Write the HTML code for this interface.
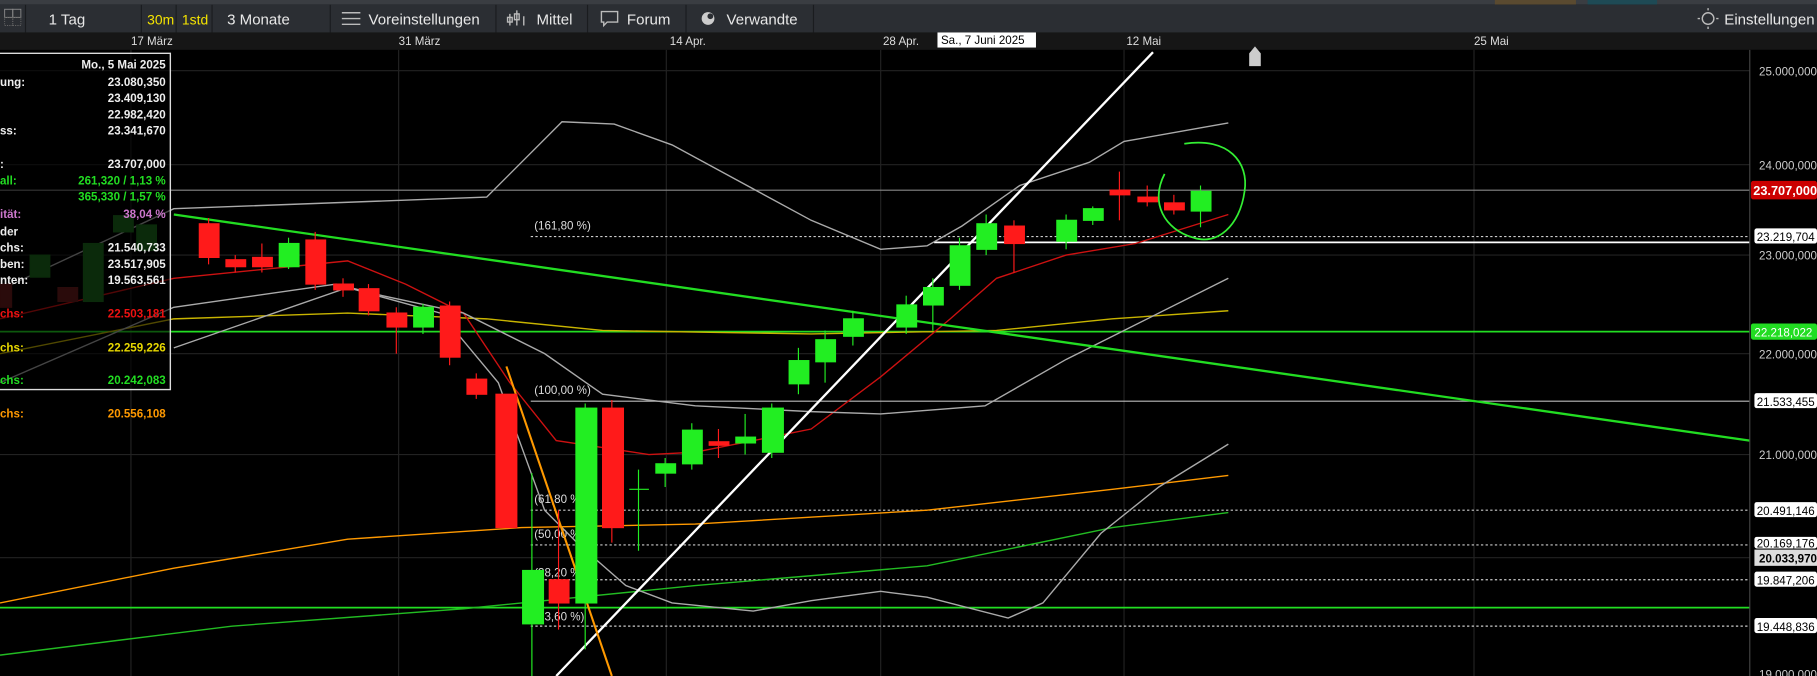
<!DOCTYPE html>
<html><head><meta charset="utf-8"><style>
html,body{margin:0;padding:0;background:#000;overflow:hidden}
svg{display:block}
text{font-family:"Liberation Sans",sans-serif}
</style></head><body>
<svg width="1817" height="676" viewBox="0 0 1568 583" preserveAspectRatio="none" xmlns="http://www.w3.org/2000/svg">
<rect width="1568" height="583" fill="#000"/>
<!-- top strip -->
<rect x="0" y="0" width="1568" height="4" fill="#3a3d42"/>
<rect x="1370" y="0" width="60" height="4" fill="#1e4a55"/>
<rect x="1290" y="0" width="70" height="4" fill="#5a4a30"/>
<!-- toolbar -->
<rect x="0" y="4" width="1568" height="24" fill="#2b2e33"/>
<g stroke="#1a1c1f" stroke-width="1">
<line x1="22" y1="4" x2="22" y2="28"/><line x1="122" y1="4" x2="122" y2="28"/><line x1="152" y1="4" x2="152" y2="28"/><line x1="183" y1="4" x2="183" y2="28"/><line x1="285" y1="4" x2="285" y2="28"/><line x1="428" y1="4" x2="428" y2="28"/><line x1="507" y1="4" x2="507" y2="28"/><line x1="592" y1="4" x2="592" y2="28"/><line x1="702" y1="4" x2="702" y2="28"/>
</g>
<rect x="4" y="8" width="7" height="7" fill="none" stroke="#888" stroke-width="0.8"/><rect x="11" y="8" width="7" height="7" fill="none" stroke="#888" stroke-width="0.8"/><rect x="4" y="15" width="7" height="7" fill="none" stroke="#666" stroke-width="0.8" stroke-dasharray="1,1"/><rect x="11" y="15" width="7" height="7" fill="none" stroke="#666" stroke-width="0.8" stroke-dasharray="1,1"/>
<g font-size="13" fill="#e8e8e8">
<text x="42" y="21">1 Tag</text>
<text x="127" y="21" fill="#f5e400" font-size="12">30m</text>
<text x="157" y="21" fill="#f5e400" font-size="12">1std</text>
<text x="196" y="21">3 Monate</text>
<text x="318" y="21">Voreinstellungen</text>
<text x="463" y="21">Mittel</text>
<text x="541" y="21">Forum</text>
<text x="627" y="21">Verwandte</text>
<text x="1488" y="21">Einstellungen</text>
</g>
<g stroke="#bbb" stroke-width="1.2" fill="none">
<line x1="295" y1="11" x2="311" y2="11"/><line x1="295" y1="16" x2="311" y2="16"/><line x1="295" y1="21" x2="311" y2="21"/>
<path d="M440 12v10M446 9v13M452 14v8"/><rect x="438" y="15" width="4" height="4"/><rect x="444" y="12" width="4" height="5"/>
<path d="M519 10h14v9h-9l-3 3v-3h-2z"/>
<circle cx="1474" cy="16" r="5"/><path d="M1467 16h-2M1481 16h2M1474 9v-2M1474 23v2"/>
</g>
<circle cx="611" cy="16" r="5.5" fill="#ccc"/><circle cx="613" cy="14" r="2.5" fill="#2b2e33"/>
<!-- date row -->
<rect x="0" y="28" width="1568" height="15" fill="#161616"/>
<g font-size="10" fill="#ddd">
<text x="113" y="39">17 März</text><text x="344" y="39">31 März</text><text x="578" y="39">14 Apr.</text><text x="762" y="39">28 Apr.</text><text x="972" y="39">12 Mai</text><text x="1272" y="39">25 Mai</text>
</g>
<rect x="809" y="28" width="85" height="13" fill="#fff"/><text x="812" y="38" font-size="10" fill="#000">Sa., 7 Juni 2025</text>
<!-- grid -->
<g stroke="#222" stroke-width="1">
<line x1="113" y1="43" x2="113" y2="583"/><line x1="344" y1="43" x2="344" y2="583"/><line x1="575" y1="43" x2="575" y2="583"/><line x1="760" y1="43" x2="760" y2="583"/><line x1="970" y1="43" x2="970" y2="583"/><line x1="1272" y1="43" x2="1272" y2="583"/>
<line x1="0" y1="61" x2="1510" y2="61"/><line x1="0" y1="142" x2="1510" y2="142"/><line x1="0" y1="220" x2="1510" y2="220"/><line x1="0" y1="305" x2="1510" y2="305"/><line x1="0" y1="392" x2="1510" y2="392"/><line x1="0" y1="481" x2="1510" y2="481"/>
</g>
<!-- horizontal levels -->
<line x1="0" y1="164" x2="1510" y2="164" stroke="#888" stroke-width="1"/>
<line x1="458" y1="204" x2="1510" y2="204" stroke="#ccc" stroke-dasharray="2,2"/>
<line x1="806" y1="209" x2="1510" y2="209" stroke="#fff" stroke-width="1.5"/>
<line x1="0" y1="286" x2="1510" y2="286" stroke="#22dd22" stroke-width="1.5"/>
<line x1="458" y1="346" x2="1510" y2="346" stroke="#bbb" stroke-width="1"/>
<g stroke="#ccc" stroke-dasharray="2,2"><line x1="458" y1="440" x2="1510" y2="440"/><line x1="458" y1="470" x2="1510" y2="470"/><line x1="458" y1="500" x2="1510" y2="500"/><line x1="458" y1="540" x2="1510" y2="540"/></g>
<line x1="0" y1="524" x2="1510" y2="524" stroke="#22dd22" stroke-width="1.5"/>
<g font-size="10" fill="#ddd"><text x="461" y="198">(161,80 %)</text><text x="461" y="340">(100,00 %)</text><text x="461" y="434">(61,80 %)</text><text x="461" y="464">(50,00 %)</text><text x="461" y="497">(38,20 %)</text><text x="461" y="535">(23,60 %)</text></g>
<!-- MAs -->
<polyline fill="none" stroke="#ff9900" stroke-width="1.2" points="0,520 150,490 300,465 450,455 600,452 800,440 960,422 1060,410"/>
<polyline fill="none" stroke="#22bb22" stroke-width="1.2" points="0,565 200,540 400,525 600,505 800,488 960,455 1060,442"/>
<polyline fill="none" stroke="#c8b400" stroke-width="1.2" points="0,305 150,275 300,270 420,275 520,285 700,288 860,285 960,275 1060,268"/>
<polyline fill="none" stroke="#cc1111" stroke-width="1.2" points="0,275 150,240 300,225 350,245 400,270 440,330 480,380 560,392 600,390 700,370 760,325 820,275 860,240 920,220 980,210 1060,185"/>
<polyline fill="none" stroke="#aaa" stroke-width="1.2" points="0,250 150,180 420,170 485,105 530,107 580,125 700,190 760,215 800,212 830,195 880,160 940,140 970,122 1060,106"/>
<polyline fill="none" stroke="#aaa" stroke-width="1.2" points="0,330 150,265 290,245 330,255 400,270 470,305 520,340 600,350 700,355 760,357 850,350 920,310 970,285 1060,240"/>
<polyline fill="none" stroke="#aaa" stroke-width="1.2" points="150,300 300,248 380,270 430,330 470,440 500,470 540,505 580,520 650,527 700,518 760,510 800,515 870,533 900,520 950,460 1000,420 1060,383"/>
<!-- trendlines -->
<line x1="150" y1="185" x2="1510" y2="380" stroke="#22dd22" stroke-width="2"/>
<line x1="480" y1="583" x2="995" y2="45" stroke="#fff" stroke-width="2"/>
<line x1="437" y1="316" x2="528" y2="583" stroke="#ff9900" stroke-width="1.8"/>
<!-- candles -->
<g stroke-width="1">
<g fill="#ff1a1a" stroke="#ff1a1a">
<line x1="180" y1="188" x2="180" y2="228"/><rect x="172" y="193" width="17" height="29"/>
<line x1="203" y1="220" x2="203" y2="235"/><rect x="195" y="224" width="17" height="6"/>
<line x1="226" y1="210" x2="226" y2="235"/><rect x="218" y="222" width="17" height="8"/>
<line x1="272" y1="200" x2="272" y2="250"/><rect x="264" y="207" width="17" height="38"/>
<line x1="296" y1="240" x2="296" y2="256"/><rect x="288" y="245" width="17" height="5"/>
<line x1="318" y1="245" x2="318" y2="272"/><rect x="310" y="249" width="17" height="19"/>
<line x1="342" y1="265" x2="342" y2="305"/><rect x="334" y="270" width="17" height="12"/>
<line x1="388" y1="260" x2="388" y2="315"/><rect x="380" y="264" width="17" height="44"/>
<line x1="411" y1="322" x2="411" y2="344"/><rect x="403" y="327" width="17" height="13"/>
<rect x="428" y="340" width="18" height="115"/>
<line x1="482" y1="440" x2="482" y2="543"/><rect x="474" y="500" width="17" height="20"/>
<line x1="528" y1="345" x2="528" y2="468"/><rect x="520" y="352" width="18" height="103"/>
<line x1="620" y1="370" x2="620" y2="395"/><rect x="612" y="381" width="17" height="3"/>
<line x1="875" y1="190" x2="875" y2="235"/><rect x="867" y="195" width="17" height="15"/>
<line x1="966" y1="148" x2="966" y2="190"/><rect x="958" y="164" width="17" height="4"/>
<line x1="990" y1="160" x2="990" y2="178"/><rect x="982" y="170" width="17" height="4"/>
<line x1="1013" y1="168" x2="1013" y2="185"/><rect x="1005" y="175" width="17" height="6"/>
</g>
<g fill="#22ee22" stroke="#22ee22">
<line x1="249" y1="205" x2="249" y2="232"/><rect x="241" y="210" width="17" height="20"/>
<line x1="365" y1="262" x2="365" y2="288"/><rect x="357" y="265" width="17" height="17"/>
<line x1="459" y1="408" x2="459" y2="583"/><rect x="451" y="492" width="18" height="46"/>
<line x1="505" y1="348" x2="505" y2="560"/><rect x="497" y="352" width="18" height="168"/>
<line x1="551" y1="405" x2="551" y2="475"/><line x1="543" y1="422" x2="560" y2="422"/>
<line x1="574" y1="395" x2="574" y2="420"/><rect x="566" y="400" width="17" height="8"/>
<line x1="597" y1="365" x2="597" y2="405"/><rect x="589" y="371" width="17" height="29"/>
<line x1="643" y1="357" x2="643" y2="392"/><rect x="635" y="377" width="17" height="5"/>
<line x1="666" y1="348" x2="666" y2="395"/><rect x="658" y="352" width="18" height="38"/>
<line x1="689" y1="300" x2="689" y2="340"/><rect x="681" y="311" width="17" height="20"/>
<line x1="712" y1="285" x2="712" y2="330"/><rect x="704" y="293" width="17" height="19"/>
<line x1="736" y1="268" x2="736" y2="298"/><rect x="728" y="275" width="17" height="15"/>
<line x1="782" y1="255" x2="782" y2="288"/><rect x="774" y="263" width="17" height="19"/>
<line x1="805" y1="240" x2="805" y2="285"/><rect x="797" y="248" width="17" height="15"/>
<line x1="828" y1="205" x2="828" y2="250"/><rect x="820" y="212" width="17" height="34"/>
<line x1="851" y1="185" x2="851" y2="220"/><rect x="843" y="193" width="17" height="22"/>
<line x1="920" y1="185" x2="920" y2="215"/><rect x="912" y="190" width="17" height="18"/>
<line x1="943" y1="178" x2="943" y2="194"/><rect x="935" y="180" width="17" height="10"/>
<line x1="1036" y1="160" x2="1036" y2="196"/><rect x="1028" y="165" width="17" height="17"/>
</g>
<g fill="#1c6a1c" stroke="#1c6a1c">
<rect x="26" y="220" width="17" height="19"/><rect x="72" y="210" width="17" height="50"/><rect x="118" y="194" width="17" height="22"/><rect x="98" y="186" width="17" height="14"/>
</g>
<g fill="#6a1c1c" stroke="#6a1c1c"><rect x="50" y="248" width="17" height="12"/><rect x="0" y="245" width="10" height="20"/></g>
</g>
<!-- green circle -->
<path d="M1022,124 C1060,118 1078,140 1074,165 C1070,195 1050,212 1030,205 C1005,198 992,175 1005,150" fill="none" stroke="#33ee33" stroke-width="1.5"/>
<path d="M1078,46 l5,-6 l5,6 v11 h-10z" fill="#ccc"/>
<!-- left panel -->
<rect x="0" y="46" width="147" height="290" fill="#000" opacity="0.6"/>
<path d="M0 46H147V336H0" fill="none" stroke="#ddd" stroke-width="1.2"/>
<g font-size="10" font-weight="bold" fill="#eee">
<text x="143" y="59" text-anchor="end">Mo., 5 Mai 2025</text>
<text x="0" y="74">ung:</text><text x="143" y="74" text-anchor="end">23.080,350</text>
<text x="143" y="88" text-anchor="end">23.409,130</text>
<text x="143" y="102" text-anchor="end">22.982,420</text>
<text x="0" y="116">ss:</text><text x="143" y="116" text-anchor="end">23.341,670</text>
<text x="0" y="145">:</text><text x="143" y="145" text-anchor="end">23.707,000</text>
<g fill="#22dd22"><text x="0" y="159">all:</text><text x="143" y="159" text-anchor="end">261,320 / 1,13 %</text><text x="143" y="173" text-anchor="end">365,330 / 1,57 %</text></g>
<g fill="#cc77cc"><text x="0" y="188">ität:</text><text x="143" y="188" text-anchor="end">38,04 %</text></g>
<text x="0" y="203">der</text>
<text x="0" y="217">chs:</text><text x="143" y="217" text-anchor="end">21.540,733</text>
<text x="0" y="231">ben:</text><text x="143" y="231" text-anchor="end">23.517,905</text>
<text x="0" y="245">nten:</text><text x="143" y="245" text-anchor="end">19.563,561</text>
<g fill="#ee1111"><text x="0" y="274">chs:</text><text x="143" y="274" text-anchor="end">22.503,181</text></g>
<g fill="#e8d800"><text x="0" y="303">chs:</text><text x="143" y="303" text-anchor="end">22.259,226</text></g>
<g fill="#22dd22"><text x="0" y="331">chs:</text><text x="143" y="331" text-anchor="end">20.242,083</text></g>
<g fill="#ff9900"><text x="0" y="360">chs:</text><text x="143" y="360" text-anchor="end">20.556,108</text></g>
</g>
<!-- right axis -->
<rect x="1510" y="43" width="58" height="540" fill="#000"/>
<line x1="1510" y1="43" x2="1510" y2="583" stroke="#444"/>
<g font-size="10" fill="#ccc">
<text x="1518" y="65">25.000,000</text><text x="1518" y="146">24.000,000</text><text x="1518" y="224">23.000,000</text><text x="1518" y="309">22.000,000</text><text x="1518" y="396">21.000,000</text><text x="1518" y="585">19.000,000</text>
</g>
<rect x="1511" y="156" width="57" height="16" rx="2" fill="#c00"/><text x="1513" y="168" font-size="11" font-weight="bold" fill="#fff">23.707,000</text>
<rect x="1511" y="279" width="57" height="14" rx="2" fill="#22dd22"/><text x="1514" y="290" font-size="10" fill="#fff">22.218,022</text>
<g font-size="10" fill="#000">
<rect x="1514" y="197" width="54" height="13" rx="2" fill="#fff"/><text x="1516" y="208">23.219,704</text>
<rect x="1514" y="339" width="54" height="13" rx="2" fill="#fff"/><text x="1516" y="350">21.533,455</text>
<rect x="1514" y="433" width="54" height="13" rx="2" fill="#fff"/><text x="1516" y="444">20.491,146</text>
<rect x="1514" y="463" width="54" height="10" rx="2" fill="#fff"/><text x="1516" y="472">20.169,176</text>
<rect x="1514" y="474" width="54" height="14" fill="#ddd"/><text x="1518" y="485" font-weight="bold">20.033,970</text>
<rect x="1514" y="493" width="54" height="13" rx="2" fill="#fff"/><text x="1516" y="504">19.847,206</text>
<rect x="1514" y="533" width="54" height="13" rx="2" fill="#fff"/><text x="1516" y="544">19.448,836</text>
</g>
</svg>
</body></html>
